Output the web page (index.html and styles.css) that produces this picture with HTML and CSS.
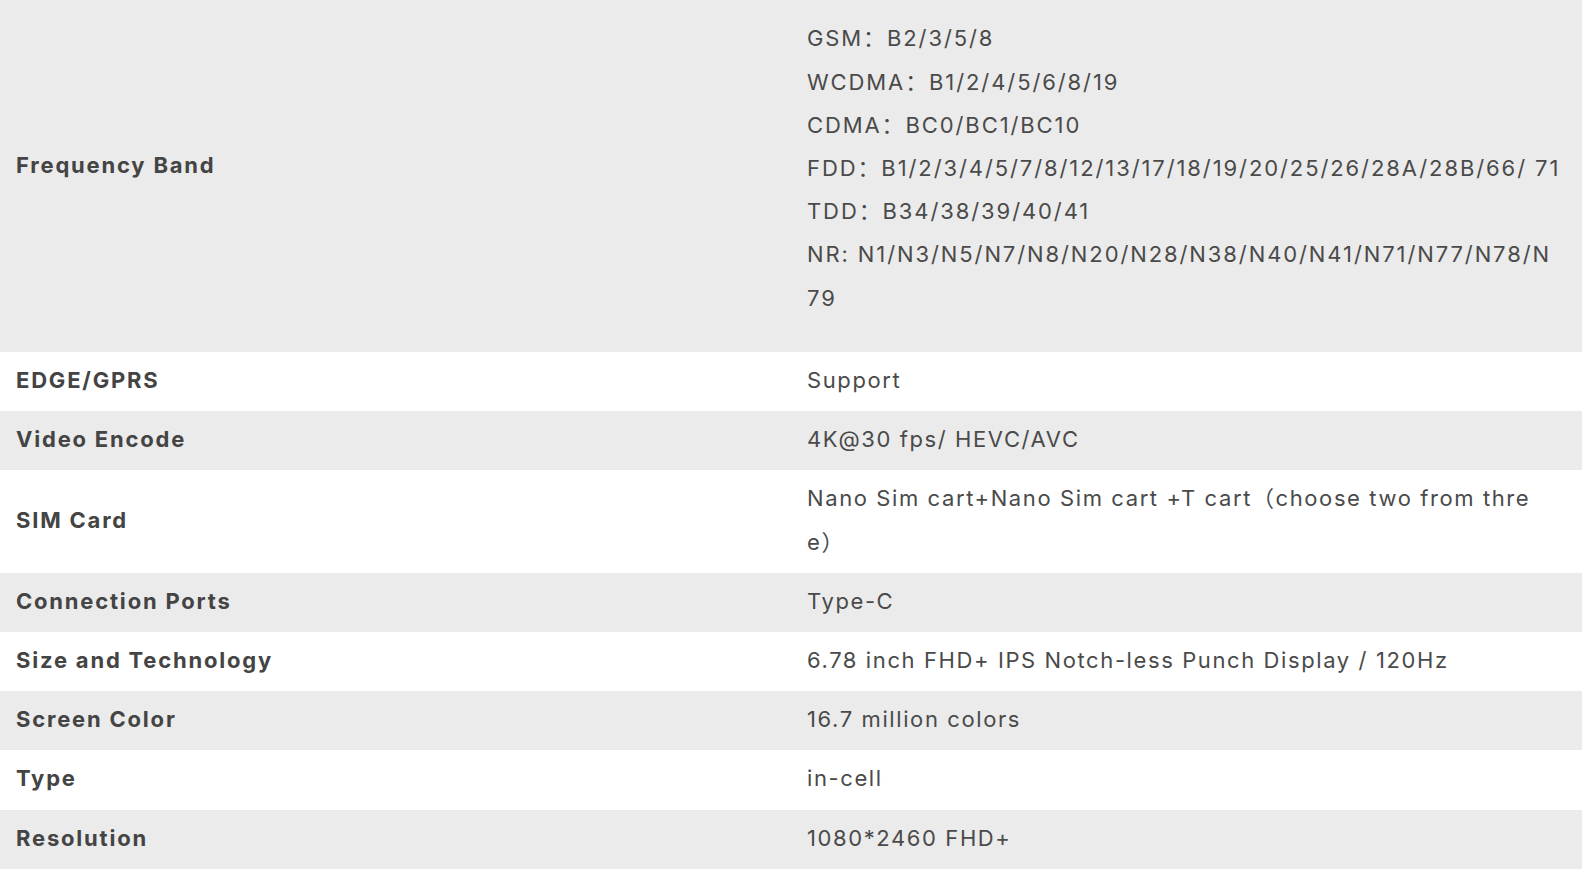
FILE: index.html
```html
<!DOCTYPE html>
<html lang="en">
<head>
<meta charset="utf-8">
<title>Specifications</title>
<link rel="stylesheet" href="styles.css">
</head>
<body>
<div class="specs">
  <div class="row">
    <div class="label">Frequency Band</div>
    <div class="value value-tall">
      <div class="line">GSM：B2/3/5/8</div>
      <div class="line">WCDMA：B1/2/4/5/6/8/19</div>
      <div class="line">CDMA：BC0/BC1/BC10</div>
      <div class="line">FDD：B1/2/3/4/5/7/8/12/13/17/18/19/20/25/26/28A/28B/66/ 71</div>
      <div class="line">TDD：B34/38/39/40/41</div>
      <div class="line">NR: N1/N3/N5/N7/N8/N20/N28/N38/N40/N41/N71/N77/N78/N79</div>
    </div>
  </div>
  <div class="row">
    <div class="label">EDGE/GPRS</div>
    <div class="value">Support</div>
  </div>
  <div class="row">
    <div class="label">Video Encode</div>
    <div class="value">4K@30 fps/ HEVC/AVC</div>
  </div>
  <div class="row">
    <div class="label">SIM Card</div>
    <div class="value">Nano Sim cart+Nano Sim cart +T cart（choose two from three）</div>
  </div>
  <div class="row">
    <div class="label">Connection Ports</div>
    <div class="value">Type-C</div>
  </div>
  <div class="row">
    <div class="label">Size and Technology</div>
    <div class="value">6.78 inch FHD+ IPS Notch-less Punch Display / 120Hz</div>
  </div>
  <div class="row">
    <div class="label">Screen Color</div>
    <div class="value">16.7 million colors</div>
  </div>
  <div class="row">
    <div class="label">Type</div>
    <div class="value">in-cell</div>
  </div>
  <div class="row">
    <div class="label">Resolution</div>
    <div class="value">1080*2460 FHD+</div>
  </div>
</div>
</body>
</html>
```
FILE: styles.css
```css
html, body {
  margin: 0;
  padding: 0;
  background: #ffffff;
}

body {
  font-family: "Inter", "Noto Sans CJK SC", sans-serif;
  color: #474747;
  overflow: hidden;
}

.specs {
  margin-top: -19px;
}

.row {
  display: grid;
  grid-template-columns: 1fr 1fr;
  align-items: center;
  background: #ffffff;
}

.row:nth-child(odd) {
  background: #ebebeb;
}

.label {
  padding: 7px 16px 9px;
  font-size: 22px;
  font-weight: 700;
  letter-spacing: 1.8px;
  line-height: 43.2px;
  color: #444444;
}

.value {
  padding: 7px 18px 9px 16px;
  font-size: 22px;
  font-weight: 400;
  letter-spacing: 1.6px;
  line-height: 43.2px;
  color: #4a4a4a;
  word-break: break-all;
  text-spacing-trim: space-all;
}

.value-tall {
  padding-top: 36.3px;
  padding-bottom: 32.3px;
  letter-spacing: 1.9px;
}
```
